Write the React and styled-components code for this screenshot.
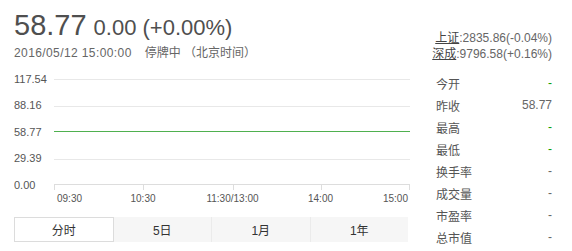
import React from "react";
import styled, { createGlobalStyle } from "styled-components";

const Global = createGlobalStyle`
  html, body { margin: 0; padding: 0; background: #fff; }
  body { font-family: "Liberation Sans", Arial, "Noto Sans CJK SC", sans-serif; }
`;

const Page = styled.div`
  display: flex;
  width: 572px;
  height: 251px;
  box-sizing: border-box;
  padding: 0 20px 0 14px;
  overflow: hidden;
`;

const LeftCol = styled.div`
  width: 396px;
  display: flex;
  flex-direction: column;
`;

const RightCol = styled.div`
  width: 126px;
  margin-left: 16px;
  padding-top: 30px;
  display: flex;
  flex-direction: column;
`;

const PriceRow = styled.div`
  margin-top: 9px;
  height: 33px;
  line-height: 33px;
  white-space: nowrap;
  color: #4f4f4f;
`;

const Price = styled.span`
  font-size: 29px;
`;

const Change = styled.span`
  font-size: 22px;
  margin-left: 7px;
`;

const DateRow = styled.div`
  margin-top: 3px;
  height: 16px;
  line-height: 16px;
  font-size: 12px;
  color: #666;
  white-space: nowrap;
`;

const DateText = styled.span`
  letter-spacing: 0.4px;
`;

const Status = styled.span`
  margin-left: 13px;
`;

const Chart = styled.svg`
  display: block;
  margin-top: 5px;
  width: 396px;
  height: 151px;
  font-family: "Liberation Sans", Arial, sans-serif;
`;

const Tabs = styled.div`
  display: flex;
  height: 25px;
  width: 394px;
`;

const Tab = styled.div`
  flex: 1;
  display: flex;
  align-items: center;
  justify-content: center;
  font-size: 12px;
  color: #333;
  box-sizing: border-box;
  background: ${(p) => (p.$active ? "#fff" : "#f6f6f6")};
  border: ${(p) => (p.$active ? "1px solid #dcdcdc" : "none")};
  border-left: ${(p) =>
    p.$active ? "1px solid #dcdcdc" : p.$sep ? "1px solid #ebebeb" : "none"};
`;

const IndexLine = styled.div`
  font-size: 12px;
  line-height: 16px;
  height: 16px;
  text-align: right;
  color: #666;
  white-space: nowrap;
`;

const IndexLink = styled.span`
  color: #444;
  text-decoration: underline;
`;

const Table = styled.div`
  margin-top: 10px;
  display: flex;
  flex-direction: column;
`;

const Row = styled.div`
  display: flex;
  justify-content: space-between;
  align-items: center;
  height: 22px;
  padding-left: 10px;
  font-size: 12px;
  color: #555;
`;

const Value = styled.span`
  color: ${(p) => (p.$green ? "#0a9d00" : "#666")};
`;

const gridRows = [79, 106, 131, 159, 184];
const yLabels = ["117.54", "88.16", "58.77", "29.39", "0.00"];
const labelCenters = [79, 105, 131.5, 158, 185];
const top = 66;
const ticks = [54, 143, 233, 321, 410];
const xLabels = [
  { t: "09:30", x: 57, a: "start" },
  { t: "10:30", x: 143, a: "middle" },
  { t: "11:30/13:00", x: 232.5, a: "middle" },
  { t: "14:00", x: 320.5, a: "middle" },
  { t: "15:00", x: 408, a: "end" },
];

const rows = [
  ["今开", "-", true],
  ["昨收", "58.77", false],
  ["最高", "-", true],
  ["最低", "-", true],
  ["换手率", "-", false],
  ["成交量", "-", false],
  ["市盈率", "-", false],
  ["总市值", "-", false],
];

const lineColor = (i) => (i === 2 ? "#4fb04f" : i === 4 ? "#dddddd" : "#e8e8e8");

export default function App() {
  const ox = 14;
  return (
    <>
      <Global />
      <Page>
        <LeftCol>
          <PriceRow>
            <Price>58.77</Price>
            <Change>0.00 (+0.00%)</Change>
          </PriceRow>
          <DateRow>
            <DateText>2016/05/12 15:00:00</DateText>
            <Status>停牌中 （北京时间）</Status>
          </DateRow>
          <Chart viewBox="0 0 396 151" shapeRendering="crispEdges">
            {gridRows.map((r, i) => (
              <line
                key={i}
                x1={54 - ox}
                x2={410 - ox}
                y1={r - top + 0.5}
                y2={r - top + 0.5}
                stroke={lineColor(i)}
                strokeWidth="1"
              />
            ))}
            {ticks.map((x, i) => (
              <line
                key={"t" + i}
                x1={x - ox + 0.5 - (i === 4 ? 1 : 0)}
                x2={x - ox + 0.5 - (i === 4 ? 1 : 0)}
                y1={184 - top}
                y2={190 - top}
                stroke="#dddddd"
              />
            ))}
            {yLabels.map((l, i) => (
              <text key={l} x={0} y={labelCenters[i] - top + 4} fontSize="11" fill="#555">
                {l}
              </text>
            ))}
            {xLabels.map((l) => (
              <text key={l.t} x={l.x - ox} y={198 - top + 3.6} fontSize="10" fill="#555" textAnchor={l.a}>
                {l.t}
              </text>
            ))}
          </Chart>
          <Tabs>
            <Tab $active>分时</Tab>
            <Tab>5日</Tab>
            <Tab $sep>1月</Tab>
            <Tab $sep>1年</Tab>
          </Tabs>
        </LeftCol>
        <RightCol>
          <IndexLine>
            <IndexLink>上证</IndexLink>:2835.86(-0.04%)
          </IndexLine>
          <IndexLine>
            <IndexLink>深成</IndexLink>:9796.58(+0.16%)
          </IndexLine>
          <Table>
            {rows.map(([k, v, g]) => (
              <Row key={k}>
                <span>{k}</span>
                <Value $green={g}>{v}</Value>
              </Row>
            ))}
          </Table>
        </RightCol>
      </Page>
    </>
  );
}
